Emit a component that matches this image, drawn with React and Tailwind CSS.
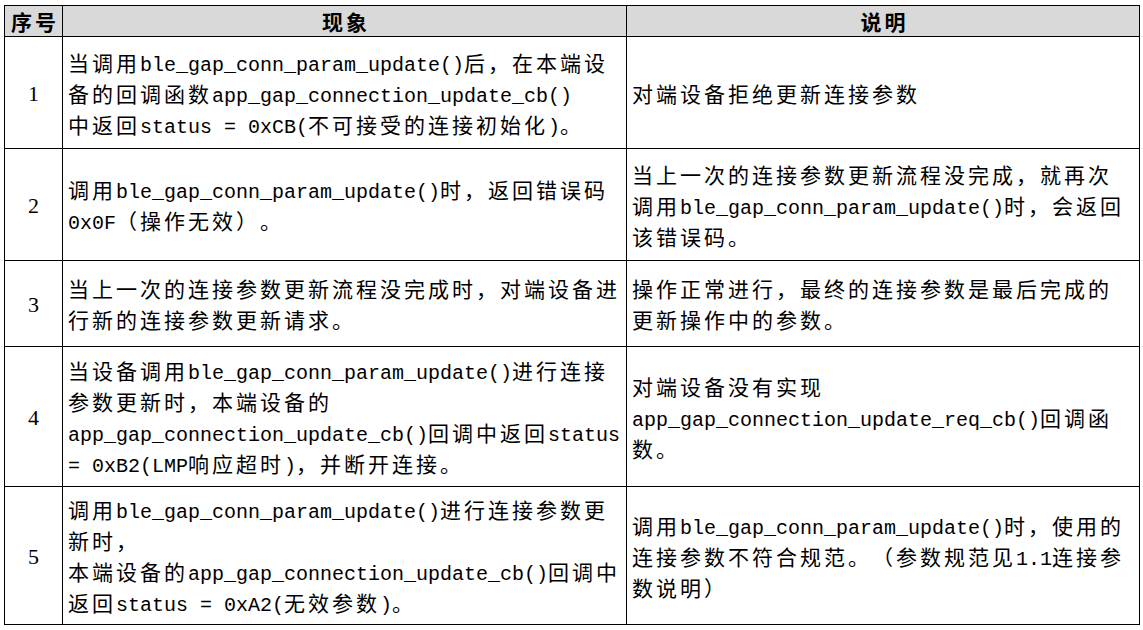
import React from "react";

const CJK_RE = /[\u3000-\u303f\u4e00-\u9fff\uff00-\uffef]/;

function Rich({ text }) {
  const runs = [];
  let cur = "";
  let curCjk = null;
  for (const ch of text) {
    const isCjk = CJK_RE.test(ch);
    if (curCjk === null || isCjk === curCjk) {
      cur += ch;
    } else {
      runs.push([curCjk, cur]);
      cur = ch;
    }
    curCjk = isCjk;
  }
  if (cur) runs.push([curCjk, cur]);
  return (
    <div className="h-[31px] whitespace-pre text-black [text-spacing-trim:space-all] [font-feature-settings:'chws'_0,'halt'_0]">
      {runs.map(([isCjk, s], i) =>
        isCjk ? (
          <span key={i} className="font-['Noto_Sans_CJK_SC',sans-serif] text-[21px]/[31px] tracking-[3px]">
            {s}
          </span>
        ) : (
          <span key={i} className="font-['Liberation_Mono',monospace] text-[20px]/[31px]">
            {s}
          </span>
        )
      )}
    </div>
  );
}

const rows = [
  {
    n: "1",
    a: [
      "当调用ble_gap_conn_param_update()后，在本端设",
      "备的回调函数app_gap_connection_update_cb()",
      "中返回status = 0xCB(不可接受的连接初始化)。",
    ],
    b: ["对端设备拒绝更新连接参数"],
  },
  {
    n: "2",
    a: ["调用ble_gap_conn_param_update()时，返回错误码", "0x0F（操作无效）。"],
    b: [
      "当上一次的连接参数更新流程没完成，就再次",
      "调用ble_gap_conn_param_update()时，会返回",
      "该错误码。",
    ],
  },
  {
    n: "3",
    a: ["当上一次的连接参数更新流程没完成时，对端设备进", "行新的连接参数更新请求。"],
    b: ["操作正常进行，最终的连接参数是最后完成的", "更新操作中的参数。"],
  },
  {
    n: "4",
    a: [
      "当设备调用ble_gap_conn_param_update()进行连接",
      "参数更新时，本端设备的",
      "app_gap_connection_update_cb()回调中返回status",
      "= 0xB2(LMP响应超时)，并断开连接。",
    ],
    b: ["对端设备没有实现", "app_gap_connection_update_req_cb()回调函", "数。"],
  },
  {
    n: "5",
    a: [
      "调用ble_gap_conn_param_update()进行连接参数更",
      "新时，",
      "本端设备的app_gap_connection_update_cb()回调中",
      "返回status = 0xA2(无效参数)。",
    ],
    b: [
      "调用ble_gap_conn_param_update()时，使用的",
      "连接参数不符合规范。（参数规范见1.1连接参",
      "数说明）",
    ],
  },
];

export default function App() {
  return (
    <div className="w-[1143px] h-[630px] bg-white overflow-hidden pt-[5px] pl-[4px]">
      <div className="w-[1136px] grid grid-cols-[58px_564px_513px] grid-rows-[31px_112px_112px_86px_140px_138px] border-l border-t border-black">
        <div className="bg-[#d9d9d9] border-r border-b border-black flex items-center justify-center pl-[3px]">
          <span className="font-['Noto_Sans_CJK_SC',sans-serif] font-bold text-[21px]/[31px] tracking-[3px] text-black">序号</span>
        </div>
        <div className="bg-[#d9d9d9] border-r border-b border-black flex items-center justify-center pl-[3px]">
          <span className="font-['Noto_Sans_CJK_SC',sans-serif] font-bold text-[21px]/[31px] tracking-[3px] text-black">现象</span>
        </div>
        <div className="bg-[#d9d9d9] border-r border-b border-black flex items-center justify-center pl-[3px]">
          <span className="font-['Noto_Sans_CJK_SC',sans-serif] font-bold text-[21px]/[31px] tracking-[3px] text-black">说明</span>
        </div>
        {rows.map((r) => (
          <React.Fragment key={r.n}>
            <div className="border-r border-b border-black flex items-center justify-center pt-[1px]">
              <span className="font-['Liberation_Serif',serif] text-[22px]/[31px] text-black">{r.n}</span>
            </div>
            <div className="border-r border-b border-black flex flex-col justify-center pl-[5px] pt-[1px]">
              {r.a.map((l, i) => (
                <Rich key={i} text={l} />
              ))}
            </div>
            <div className="border-r border-b border-black flex flex-col justify-center pl-[5px] pt-[1px]">
              {r.b.map((l, i) => (
                <Rich key={i} text={l} />
              ))}
            </div>
          </React.Fragment>
        ))}
      </div>
    </div>
  );
}
